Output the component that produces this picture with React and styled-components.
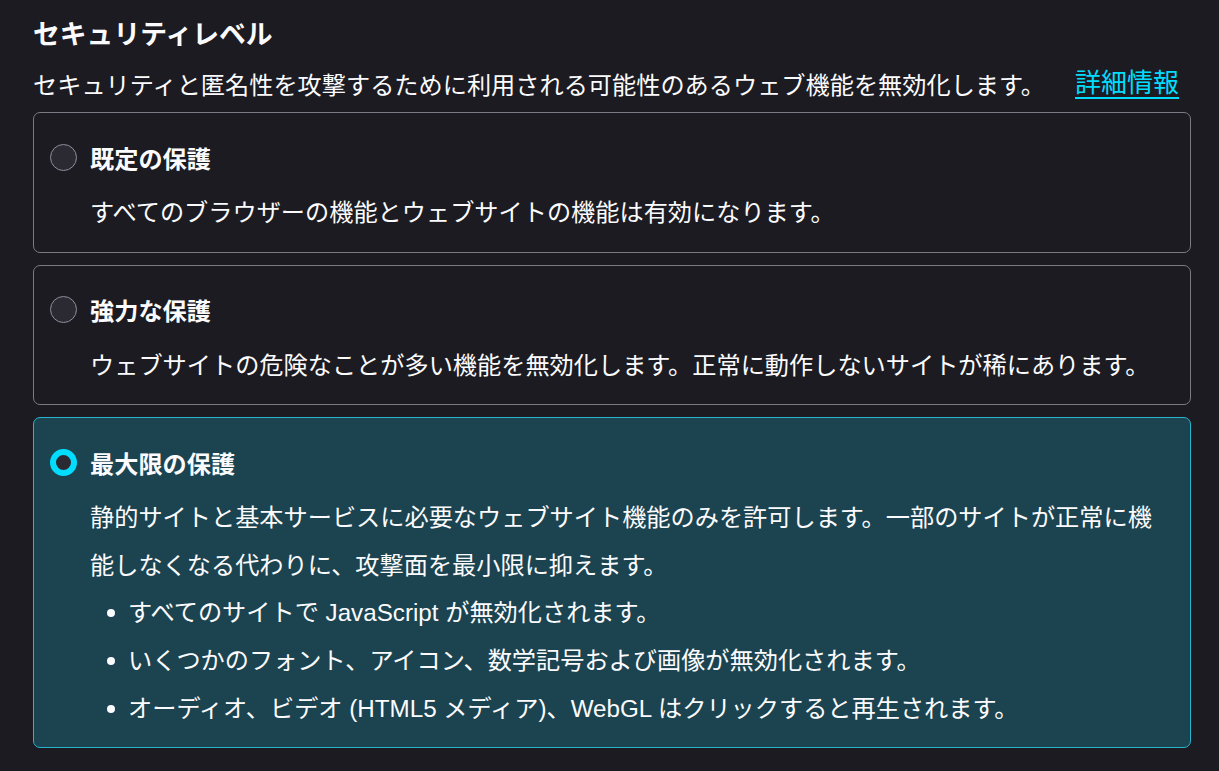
import React from "react";
import styled, { createGlobalStyle } from "styled-components";

const GlobalStyle = createGlobalStyle`
  body {
    margin: 0;
    background-color: #1c1b22;
    color: #fbfbfe;
    font-family: "Liberation Sans", "Noto Sans CJK JP", sans-serif;
  }
`;

const Page = styled.div`
  padding: 15px 28px 0 33px;
  width: 1158px;
`;

const Title = styled.h1`
  margin: 0;
  font-size: 26.8px;
  font-weight: 700;
  line-height: 40px;
`;

const Lead = styled.p`
  display: flex;
  align-items: center;
  height: 36px;
  margin: 10px 0 11px;
  font-size: 24.2px;
  white-space: nowrap;
`;

const LearnMore = styled.a`
  margin-left: 30px;
  font-size: 26px;
  line-height: 36px;
  color: #00ddff;
  text-decoration: underline;
  text-underline-offset: 5px;
`;

const Options = styled.div`
  display: flex;
  flex-direction: column;
  gap: 12px;
`;

const Card = styled.label`
  display: block;
  border: 1px solid ${(p) => (p.$selected ? "#2ab3cc" : "#7a7a84")};
  background-color: ${(p) => (p.$selected ? "#1b4450" : "transparent")};
  border-radius: 7px;
  padding: 27px 20px 15px 16px;
`;

const Header = styled.div`
  display: flex;
  align-items: center;
  gap: 13px;
  height: 34px;
`;

const Radio = styled.span`
  box-sizing: border-box;
  width: 27px;
  height: 27px;
  border-radius: 50%;
  background-color: #2b2a33;
  border: ${(p) => (p.$checked ? "6px solid #00ddff" : "1px solid #8f8f9d")};
  flex-shrink: 0;
`;

const OptionName = styled.span`
  font-size: 24.2px;
  font-weight: 700;
`;

const Body = styled.div`
  margin-left: 40px;
  margin-top: 15px;
  font-size: 24.2px;
  line-height: 47.6px;
`;

const List = styled.ul`
  margin: 0;
  padding-left: 38px;
  list-style: none;
`;

const Item = styled.li`
  position: relative;
  &::before {
    content: "";
    position: absolute;
    left: -21px;
    top: 20px;
    width: 8px;
    height: 8px;
    border-radius: 50%;
    background-color: #fbfbfe;
  }
`;

const options = [
  {
    name: "既定の保護",
    text: "すべてのブラウザーの機能とウェブサイトの機能は有効になります。",
  },
  {
    name: "強力な保護",
    text: "ウェブサイトの危険なことが多い機能を無効化します。正常に動作しないサイトが稀にあります。",
  },
  {
    name: "最大限の保護",
    selected: true,
    text: "静的サイトと基本サービスに必要なウェブサイト機能のみを許可します。一部のサイトが正常に機能しなくなる代わりに、攻撃面を最小限に抑えます。",
    items: [
      "すべてのサイトで JavaScript が無効化されます。",
      "いくつかのフォント、アイコン、数学記号および画像が無効化されます。",
      "オーディオ、ビデオ (HTML5 メディア)、WebGL はクリックすると再生されます。",
    ],
  },
];

export default function App() {
  return (
    <Page>
      <GlobalStyle />
      <Title>セキュリティレベル</Title>
      <Lead>
        <span>
          セキュリティと匿名性を攻撃するために利用される可能性のあるウェブ機能を無効化します。
        </span>
        <LearnMore href="#">詳細情報</LearnMore>
      </Lead>
      <Options>
        {options.map((o) => (
          <Card key={o.name} $selected={o.selected}>
            <Header>
              <Radio $checked={o.selected} />
              <OptionName>{o.name}</OptionName>
            </Header>
            <Body>
              {o.text}
              {o.items && (
                <List>
                  {o.items.map((i) => (
                    <Item key={i}>{i}</Item>
                  ))}
                </List>
              )}
            </Body>
          </Card>
        ))}
      </Options>
    </Page>
  );
}
